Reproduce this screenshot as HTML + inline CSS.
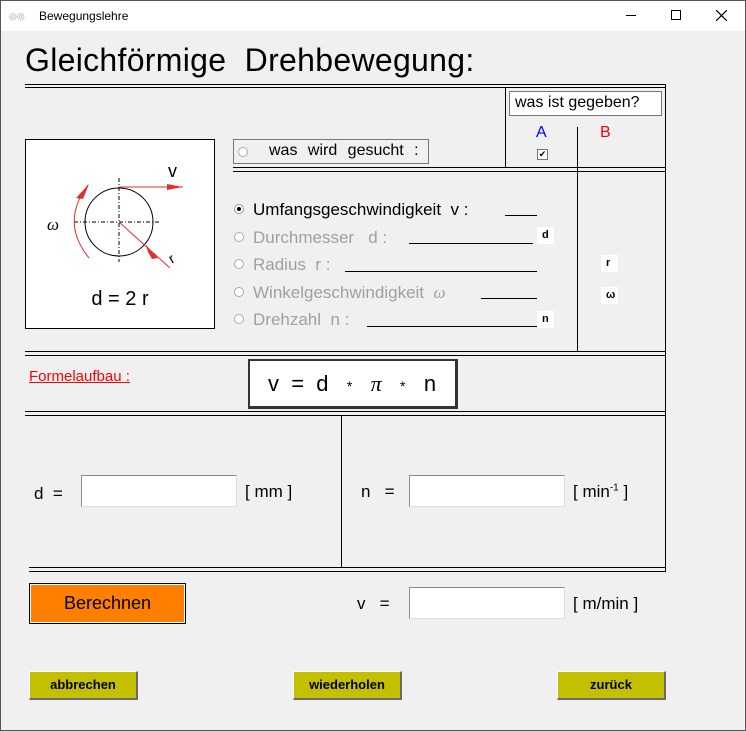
<!DOCTYPE html>
<html><head><meta charset="utf-8"><style>
*{margin:0;padding:0;box-sizing:border-box}
body{width:746px;height:731px;background:#f0f0f0;position:relative;overflow:hidden;font-family:"Liberation Sans",sans-serif}
.a{position:absolute}
.h{position:absolute;height:1px;background:#000}
.v{position:absolute;width:1px;background:#000}
.rad{position:absolute;width:10px;height:10px;border-radius:50%;border:1px solid #aaa;background:#fff}
.it{position:absolute;font-size:17px;color:#a0a0a0;white-space:nowrap}
.ul{position:absolute;height:1px;background:#000}
.tag{position:absolute;background:#fff;font-size:11px;font-weight:bold;width:17px;height:17px;padding:2px 0 0 5px}
.inp{position:absolute;background:#fff;border:1px solid #8a8a8a;border-right-color:#ddd;border-bottom-color:#ddd;width:156px;height:32px}
.btn{position:absolute;width:109px;height:29px;background:#c4c000;border:1px solid #fff;border-right:2px solid #6a6a6a;border-bottom:2px solid #6a6a6a;font-size:13px;font-weight:bold;text-align:center;line-height:26px}
</style></head><body>
<div class="a" style="left:0;top:0;width:746px;height:731px;border:1px solid #555;pointer-events:none;z-index:9"></div>
<div class="a" style="left:0;top:0;width:746px;height:31px;background:#fff"></div>
<div class="a" style="left:9px;top:11px;font-size:9px;color:#999">◎◎</div>
<div class="a" style="left:39px;top:9px;font-size:12px">Bewegungslehre</div>
<div class="a" style="left:626px;top:15px;width:10px;height:1px;background:#000"></div>
<div class="a" style="left:671px;top:10px;width:10px;height:10px;border:1px solid #000"></div>
<svg class="a" style="left:716px;top:10px" width="11" height="11"><path d="M0 0L11 11M11 0L0 11" stroke="#000" stroke-width="1.2"/></svg>

<div class="a" style="left:25px;top:42px;font-size:32px;letter-spacing:0.3px">Gleichförmige&nbsp; Drehbewegung:</div>

<div class="h" style="left:25px;top:84px;width:641px"></div>
<div class="h" style="left:25px;top:87px;width:641px"></div>
<div class="v" style="left:665px;top:84px;height:488px"></div>
<div class="v" style="left:505px;top:87px;height:81px"></div>
<div class="a" style="left:509px;top:91px;width:153px;height:25px;border:1px solid #777;background:#fff;font-size:16px;padding:2px 0 0 5px">was ist gegeben?</div>
<div class="a" style="left:536px;top:124px;color:#00f;font-size:16px">A</div>
<div class="a" style="left:600px;top:124px;color:#f00;font-size:16px">B</div>
<div class="a" style="left:537px;top:149px;width:11px;height:11px;border:1px solid #777;background:#fff;font-size:9px;line-height:9px;text-align:center">✔</div>
<div class="v" style="left:577px;top:127px;height:224px"></div>
<div class="h" style="left:233px;top:167px;width:433px"></div>
<div class="h" style="left:233px;top:171px;width:433px"></div>

<div class="a" style="left:233px;top:139px;width:196px;height:25px;border:1px solid #777;background:#f0f0f0"></div>
<div class="rad" style="left:238px;top:147px"></div>
<div class="a" style="left:269px;top:142px;font-size:16px;word-spacing:6px">was wird gesucht :</div>

<div class="a" style="left:25px;top:139px;width:190px;height:190px;background:#fff;border:1px solid #000">
<svg width="190" height="190" viewBox="25 139 190 190" style="position:absolute;left:-1px;top:-1px">
<circle cx="119" cy="222" r="34" fill="none" stroke="#000" stroke-width="1"/>
<line x1="119" y1="178" x2="119" y2="262" stroke="#000" stroke-dasharray="4,2,1,2"/>
<line x1="74" y1="222" x2="160" y2="222" stroke="#000" stroke-dasharray="4,2,1,2"/>
<line x1="119" y1="187" x2="183" y2="187" stroke="#e03030"/>
<path d="M167 184 L183 187 L167 190 Z" fill="#e03030"/>
<path d="M89 258 Q60 222 88 185" fill="none" stroke="#e03030"/>
<path d="M89 184 L76 198 L83 199 Z" fill="#e03030"/>
<line x1="119" y1="222" x2="170" y2="268" stroke="#e03030"/>
<path d="M146 245 L158 258 L152 259 L148 252Z" fill="#e03030"/>
<text x="168" y="177" font-size="18" font-family="Liberation Sans">v</text>
<text x="47" y="230" font-size="17" font-family="Liberation Serif" font-style="italic">ω</text>
<text x="169" y="263" font-size="14" font-family="Liberation Sans" transform="rotate(-30 172 258)">r</text>
<text x="120" y="305" font-size="20" font-family="Liberation Sans" text-anchor="middle">d = 2  r</text>
</svg></div>

<div class="rad" style="left:234px;top:204px;background:#fff;border-color:#999"></div><div class="a" style="left:237px;top:207px;width:4px;height:4px;border-radius:50%;background:#000"></div>
<div class="it" style="left:253px;top:200px;color:#000">Umfangsgeschwindigkeit&nbsp; v :</div>
<div class="ul" style="left:505px;top:215px;width:32px"></div>
<div class="rad" style="left:234px;top:232px"></div>
<div class="it" style="left:253px;top:228px">Durchmesser&nbsp;&nbsp; d :</div>
<div class="ul" style="left:409px;top:243px;width:124px"></div>
<div class="tag" style="left:537px;top:227px">d</div>
<div class="rad" style="left:234px;top:259px"></div>
<div class="it" style="left:253px;top:255px">Radius&nbsp; r :</div>
<div class="ul" style="left:345px;top:271px;width:192px"></div>
<div class="tag" style="left:601px;top:255px">r</div>
<div class="rad" style="left:234px;top:287px"></div>
<div class="it" style="left:253px;top:283px">Winkelgeschwindigkeit&nbsp; <i style="font-family:'Liberation Serif'">ω</i></div>
<div class="ul" style="left:481px;top:298px;width:56px"></div>
<div class="tag" style="left:601px;top:287px">ω</div>
<div class="rad" style="left:234px;top:314px"></div>
<div class="it" style="left:253px;top:310px">Drehzahl&nbsp; n :</div>
<div class="ul" style="left:367px;top:326px;width:170px"></div>
<div class="tag" style="left:537px;top:311px">n</div>

<div class="h" style="left:25px;top:351px;width:641px"></div>
<div class="h" style="left:25px;top:355px;width:641px"></div>
<div class="a" style="left:29px;top:368px;color:#f00;font-size:15px;text-decoration:underline">Formelaufbau :</div>
<div class="a" style="left:248px;top:359px;width:210px;height:50px;background:#fff;border:2px solid #333;border-right-width:3px;border-bottom-width:3px;font-size:22px;padding:10px 0 0 18px;white-space:pre">v  =  d   <span style="font-size:14px">*</span>   <i style="font-family:'Liberation Serif'">π</i>   <span style="font-size:14px">*</span>   n</div>
<div class="h" style="left:25px;top:411px;width:641px"></div>
<div class="h" style="left:25px;top:415px;width:641px"></div>
<div class="v" style="left:341px;top:415px;height:153px"></div>
<div class="a" style="left:34px;top:484px;font-size:17px">d&nbsp; =</div>
<div class="inp" style="left:81px;top:475px"></div>
<div class="a" style="left:245px;top:482px;font-size:17px">[ mm ]</div>
<div class="a" style="left:361px;top:482px;font-size:17px">n&nbsp;&nbsp; =</div>
<div class="inp" style="left:409px;top:475px"></div>
<div class="a" style="left:573px;top:482px;font-size:17px">[ min<sup style="font-size:10px">-1</sup> ]</div>
<div class="h" style="left:29px;top:567px;width:637px"></div>
<div class="h" style="left:29px;top:571px;width:637px"></div>

<div class="a" style="left:29px;top:583px;width:157px;height:41px;background:#ff8000;border:1px solid #000;box-shadow:inset 0 0 0 1px #fff;font-size:18px;text-align:center;line-height:39px">Berechnen</div>
<div class="a" style="left:357px;top:594px;font-size:17px">v&nbsp;&nbsp; =</div>
<div class="inp" style="left:409px;top:587px"></div>
<div class="a" style="left:573px;top:594px;font-size:17px">[ m/min ]</div>

<div class="btn" style="left:29px;top:671px">abbrechen</div>
<div class="btn" style="left:293px;top:671px">wiederholen</div>
<div class="btn" style="left:557px;top:671px">zurück</div>
</body></html>
